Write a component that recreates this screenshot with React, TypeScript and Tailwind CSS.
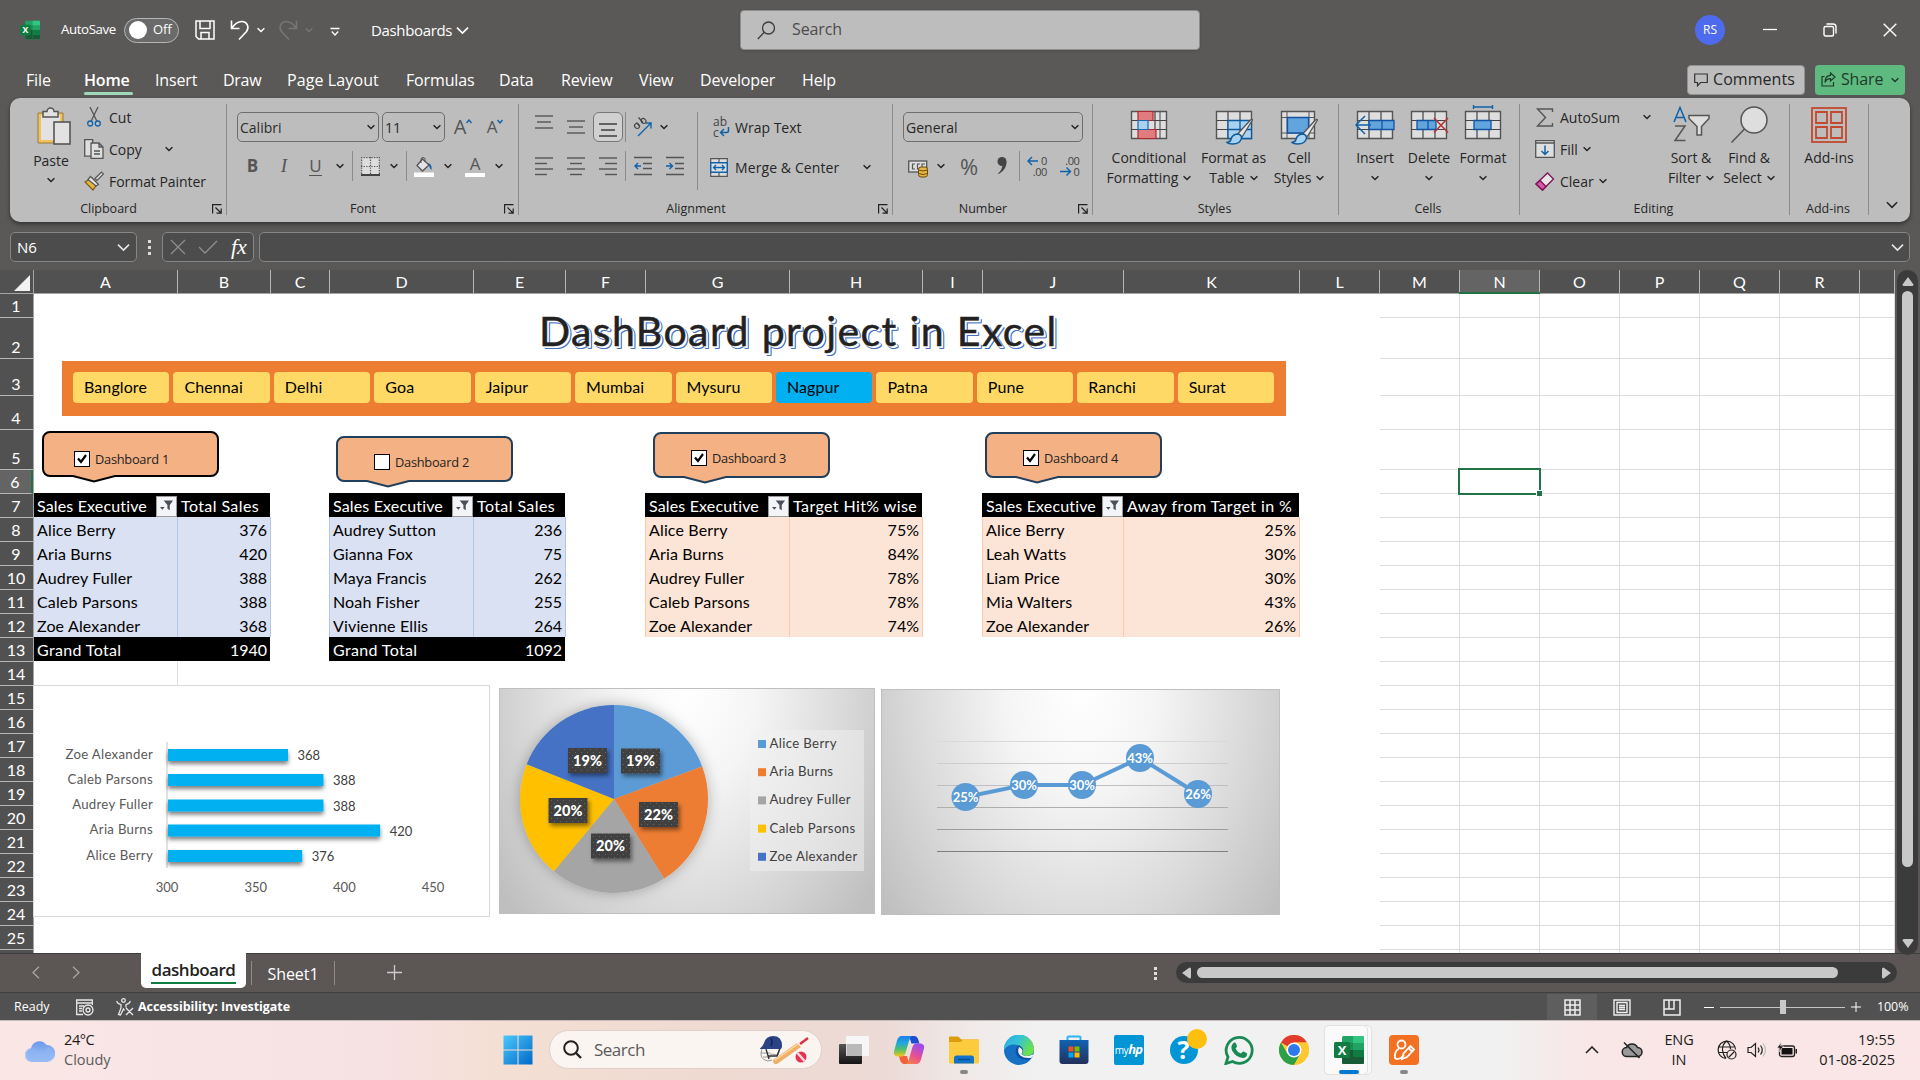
import React from "react";

const UI = "font-['Open_Sans','Noto_Sans',sans-serif]";
const CAL = "font-['Lato','Open_Sans',sans-serif]";

type P = { className?: string; children?: React.ReactNode };

const Chev = ({ className = "text-[#222]", w = 8 }: { className?: string; w?: number }) => (
  <svg width={w} height={w} viewBox="0 0 8 8" className={"shrink-0 " + className} fill="none" stroke="currentColor" strokeWidth={w > 9 ? 1 : 1.4}>
    <path d="M0.6 2.2 4 5.6 7.4 2.2" />
  </svg>
);

const Slot = ({ className = "", children }: P) => (
  <div className={"flex shrink-0 items-center justify-center " + className}>{children}</div>
);

/* ---------- Title bar ---------- */
const ExcelLogo = ({ size }: { size: number }) => (
  <svg width={size} height={size} viewBox="0 0 30 30">
    <rect x="8" y="1" width="22" height="28" rx="1.5" fill="#21a366" />
    <path d="M19 1h9.5A1.5 1.5 0 0 1 30 2.500V8H19z" fill="#33c481" />
    <path d="M8 8h11v7H8z" fill="#107c41" opacity=".55" />
    <path d="M19 15h11v7H19z" fill="#107c41" />
    <path d="M8 15h11v14H9.500A1.500 1.500 0 0 1 8 27.500z" fill="#185c37" />
    <path d="M19 22h11v5.500a1.500 1.500 0 0 1-1.500 1.500H19z" fill="#185c37" />
    <rect x="0" y="7" width="16" height="16" rx="1.5" fill="#107c41" />
    <text x="8" y="19.600" textAnchor="middle" fontSize="13" fontWeight="700" fill="#fff" fontFamily="Open Sans">X</text>
  </svg>
);

const Undo = ({ flip, className }: { flip?: boolean; className: string }) => (
  <svg width="20" height="22" viewBox="0 0 20 22" fill="none" stroke="currentColor" strokeWidth="1.600" className={className + (flip ? " -scale-x-100" : "")}>
    <path d="M1.500 1.500v8h8M2 9C5 4.500 8 2 12.500 2.500c5 .7 7 6 4 10L9 20.500" />
  </svg>
);

const TitleBar = () => (
  <div className="flex h-[60px] shrink-0 items-center pl-5 text-white">
    <ExcelLogo size={20} />
    <span className="ml-[21px] w-[55px] text-[13.300px] tracking-[-0.4px]">AutoSave</span>
    <div className="ml-2 flex h-[25px] w-[55px] items-center rounded-full border border-[#b5b5b5] bg-[#6a6a6a] pl-1">
      <div className="size-[18px] rounded-full bg-white" />
      <span className="ml-[6px] text-[13px]">Off</span>
    </div>
    <svg width="20" height="20" viewBox="0 0 20 20" fill="none" stroke="white" strokeWidth="1.500" className="ml-4">
      <path d="M1 1h18v18H3.500L1 16.500zM5 1v7.500h10V1M6 19v-6.500h8V19" />
    </svg>
    <Undo className="ml-[15px] text-white" />
    <Chev className="ml-[7px] text-white" />
    <Undo flip className="ml-[13px] text-[#777573]" />
    <Chev className="ml-[7px] text-[#777573]" />
    <svg width="10" height="10" viewBox="0 0 10 10" fill="none" stroke="white" strokeWidth="1.300" className="ml-[17px] mt-1">
      <path d="M0.500 1.500h9M1.800 4.500 5 8l3.200-3.500" />
    </svg>
    <span className="ml-[31px] w-[80px] text-[15px] tracking-[-0.35px]">Dashboards</span>
    <Chev w={13} className="ml-[5px] text-white" />
    <div className="ml-[271px] flex h-10 w-[460px] items-center rounded-[4px] border border-[#8d8d8d] bg-[#bdbdbd] pl-4 text-[16px] text-[#4c4c4c] shadow">
      <svg width="19" height="19" viewBox="0 0 19 19" fill="none" stroke="#3b3b3b" strokeWidth="1.300">
        <circle cx="11.500" cy="7" r="6" />
        <path d="M7.300 11.300.8 18" />
      </svg>
      <span className="-mt-[2px] ml-4 tracking-[-0.1px]">Search</span>
    </div>
    <Slot className="ml-[495px] size-[30px] rounded-full bg-[#4f6bed] text-[12px]">RS</Slot>
    <svg width="14" height="14" viewBox="0 0 14 14" stroke="white" strokeWidth="1.300" className="ml-[38px]"><path d="M0 6.500h14" /></svg>
    <svg width="14" height="14" viewBox="0 0 14 14" fill="none" stroke="white" strokeWidth="1.400" className="ml-[46px]">
      <rect x="1" y="3.500" width="9.500" height="9.500" rx="1.500" /><path d="M3.500 1h6.500a3 3 0 0 1 3 3v6.500" />
    </svg>
    <svg width="14" height="14" viewBox="0 0 14 14" stroke="white" strokeWidth="1.400" className="ml-[46px]"><path d="m.7.7 12.600 12.600M13.300.7.700 13.300" /></svg>
  </div>
);

const TabsBar = () => (
  <div className="flex h-[38px] shrink-0 items-center pl-[26px] pt-[1px] text-[16px] tracking-[-0.15px] text-white">
    <span className="w-[58px]">File</span>
    <div className="relative w-[71px]">
      <span className="font-semibold">Home</span>
      <div className="absolute -bottom-[3px] left-0 h-[3px] w-[49px] rounded-full bg-[#9fd8b8]" />
    </div>
    <span className="w-[68px]">Insert</span>
    <span className="w-16 tracking-[-0.3px]">Draw</span>
    <span className="w-[119px] tracking-[0.1px]">Page Layout</span>
    <span className="w-[93px]">Formulas</span>
    <span className="w-[62px]">Data</span>
    <span className="w-[78px]">Review</span>
    <span className="w-[61px]">View</span>
    <span className="w-[102px]">Developer</span>
    <span className="w-[60px]">Help</span>
    <div className="ml-[825px] flex h-[30px] w-[118px] items-center rounded-[4px] border border-[#929292] bg-[#bdbdbd] pl-[6px] tracking-[0.05px] text-[#262626]">
      <svg width="14" height="14" viewBox="0 0 14 14" fill="none" stroke="#333" strokeWidth="1.200"><path d="M.7 1h12.600v8.500H6.500L3.500 12.800V9.500H.7z" /></svg>
      <span className="-mt-px ml-[5px]">Comments</span>
    </div>
    <div className="ml-[10px] flex h-[30px] w-[90px] items-center rounded-[4px] bg-[#5fba80] pl-[6px] text-[#1e3a2a]">
      <svg width="15" height="15" viewBox="0 0 15 15" fill="none" stroke="#1e3a2a" strokeWidth="1.200"><path d="M3.500 4.500H1V14h11.500v-4M9.500 1l4.500 4-4.500 4V6.700C7 6.700 5 7.800 4 10.500 4 6 6 3.500 9.500 3.300z" /></svg>
      <span className="-mt-px ml-[5px]">Share</span>
      <Chev className="ml-[8px] text-[#1e3a2a]" />
    </div>
  </div>
);

/* ---------- Ribbon ---------- */
const Launcher = () => (
  <svg width="10" height="10" viewBox="0 0 10 10" fill="none" stroke="#222" strokeWidth="1.200" className="absolute right-[5px] top-[8px]">
    <path d="M.6 9.500V.6h8.900M3.500 3.500l5.500 5.500M9.200 4.500v4.700H4.500" />
  </svg>
);

const Group = ({ className, label, launcher, children }: P & { label: string; launcher?: boolean }) => (
  <div className={"relative flex shrink-0 flex-col " + className}>
    <div className="h-[98px]">{children}</div>
    <div className={"flex h-[26px] items-center justify-center pt-px text-[12.500px] " + (launcher ? "pr-5" : "pr-[3px] pt-[3px]")}>{label}</div>
    {launcher && <div className="absolute bottom-0 right-0 h-[26px] w-5"><Launcher /></div>}
    <div className="absolute right-0 top-[6px] h-[111px] w-px bg-[#8c8c8c]" />
  </div>
);

const VSep = ({ className }: P) => <div className={"w-px shrink-0 bg-[#8c8c8c] " + className} />;

const Big = ({ className, icon, a, b }: { className: string; icon: React.ReactNode; a: string; b?: string }) => (
  <div className={"flex shrink-0 flex-col items-center whitespace-nowrap pt-1 text-[14px] leading-5 " + className}>
    <Slot className="h-[46px]">{icon}</Slot>
    <span>{a}</span>
    {b !== undefined && (
      <span className="flex h-5 items-center gap-[5px]">{b}<Chev /></span>
    )}
  </div>
);

const Lines = ({ w, y, x = [0, 0, 0, 0], className = "text-[#555]" }: { w: number[]; y: number[]; x?: number[]; className?: string }) => (
  <svg width="18" height="20" viewBox="0 0 18 20" className={className} stroke="currentColor" strokeWidth="1.400">
    {w.map((v, i) => <path key={i} d={`M${x[i]} ${y[i]}h${v}`} />)}
  </svg>
);

const Clipboard = () => (
  <Group className="w-[217px]" label="Clipboard" launcher>
    <div className="flex">
      <div className="flex w-[74px] flex-col items-center pl-2 pt-[9px] text-[14px]">
        <svg width="34" height="39" viewBox="0 0 34 39" className="ml-[5px]">
          <path d="M1 6h25v30H1z" fill="#f0c15c" stroke="#9a7a35" />
          <path d="M4 8h19v25H4z" fill="#e2e2e2" />
          <path d="M6 4.500h4a3.500 3.500 0 0 1 7 0h4V10H6z" fill="#e2e2e2" stroke="#555" strokeWidth="1.500" />
          <rect x="17" y="15" width="16" height="22" fill="#e2e2e2" stroke="#555" strokeWidth="1.600" />
        </svg>
        <span className="mt-[5px] leading-5">Paste</span>
        <Chev className="mt-[5px] text-[#222]" />
      </div>
      <div className="pt-[3px] text-[14px]">
        <div className="flex h-8 items-center">
          <Slot className="w-5">
            <svg width="14" height="20" viewBox="0 0 14 20" fill="none" strokeWidth="1.300">
              <path d="M3 0l6.800 14M11 0 4.200 14" stroke="#555" />
              <circle cx="3.200" cy="16.500" r="2.500" stroke="#0f62a8" /><circle cx="10.800" cy="16.500" r="2.500" stroke="#0f62a8" />
            </svg>
          </Slot>
          <span className="ml-[5px]">Cut</span>
        </div>
        <div className="flex h-8 items-center">
          <Slot className="w-5">
            <svg width="20" height="20" viewBox="0 0 20 20" fill="#dedede" stroke="#555" strokeWidth="1.300">
              <path d="M.7.7h8v16.500h-8z" /><path d="M7 4h8l4 4v11.300H7zM15 4v4h4M10 12h6M10 15h6" />
            </svg>
          </Slot>
          <span className="ml-[5px] w-[54px]">Copy</span>
          <Chev className="ml-[2px] text-[#222]" />
        </div>
        <div className="flex h-8 items-center">
          <Slot className="w-5">
            <svg width="20" height="20" viewBox="0 0 20 20" strokeWidth="1.200">
              <path d="M1 11l7-4 5.500 5.500L9 19z" fill="#e8b640" stroke="#7a5a1a" />
              <path d="M6.500 5.500l8 8-2.500 1.500L4 8.500z" fill="#e8e8e8" stroke="#555" />
              <path d="M11 7.500 17.500 1 19.500 3 13 9.500z" fill="#ddd" stroke="#555" />
            </svg>
          </Slot>
          <span className="ml-[5px] whitespace-nowrap tracking-[-0.05px]">Format Painter</span>
        </div>
      </div>
    </div>
  </Group>
);

const Select = ({ className, children }: P) => (
  <div className={"flex h-[30px] shrink-0 items-center justify-between rounded-[5px] border border-[#6e6e6e] pl-[2px] pr-[3px] text-[14px] " + className}>
    {children}<Chev />
  </div>
);

const FontGroup = () => (
  <Group className="w-[292px]" label="Font" launcher>
    <div className="pl-[10px] pt-[14px] text-[#555]">
      <div className="flex h-[30px] items-center">
        <Select className="w-[142px] text-[#2b2b2b]">Calibri</Select>
        <Select className="ml-[3px] w-[63px] text-[#2b2b2b]">11</Select>
        <Slot className="relative w-8 pl-1"><span className="text-[20px]">A</span><svg width="6" height="5" viewBox="0 0 6 5" className="mb-3" fill="none" stroke="#0f62a8" strokeWidth="1.400"><path d="M.5 4 3 1l2.500 3" /></svg></Slot>
        <Slot className="relative w-8 pl-1"><span className="text-[17px]">A</span><svg width="6" height="5" viewBox="0 0 6 5" className="mb-3" fill="none" stroke="#0f62a8" strokeWidth="1.400"><path d="M.5 1 3 4l2.500-3" /></svg></Slot>
      </div>
      <div className="mt-2 flex h-8 items-center text-[17px]">
        <Slot className="w-[31px] font-bold">B</Slot>
        <Slot className="w-8 font-['Liberation_Serif',serif] text-[19px] italic">I</Slot>
        <Slot className="w-[31px]"><span className="border-b-[1.500px] border-[#555] leading-[18px]">U</span></Slot>
        <Slot className="w-[17px]"><Chev /></Slot>
        <VSep className="ml-1 h-[30px]" />
        <Slot className="ml-[7px] w-5">
          <svg width="19" height="19" viewBox="0 0 19 19" fill="none">
            <rect x=".5" y=".5" width="18" height="18" fill="#dedede" />
            <path d="M.7 0v18M9.500 0v18M18.300 0v18M0 .7h19M0 9.500h19" stroke="#555" strokeWidth="1.200" strokeDasharray="1.300 1.300" />
            <path d="M0 18h19" stroke="#333" strokeWidth="1.800" />
          </svg>
        </Slot>
        <Slot className="ml-[5px] w-[17px]"><Chev /></Slot>
        <VSep className="ml-1 h-[30px]" />
        <Slot className="ml-[7px] w-5">
          <svg width="20" height="20" viewBox="0 0 20 20" className="mt-[2px]">
            <path d="M8.500 2 15 8l-6.500 6L3 8.500z" fill="#e4e4e4" stroke="#555" strokeWidth="1.300" />
            <path d="M7 6V2.500a2 2 0 0 1 4 0V5" fill="none" stroke="#555" />
            <path d="M14 6c3 1 4 3 3.500 7-1.500-1-2-3-2.500-5z" fill="#0f62a8" />
            <path d="M0 15.500h20V20H0z" fill="#fff" />
          </svg>
        </Slot>
        <Slot className="ml-[5px] w-[17px]"><Chev /></Slot>
        <Slot className="ml-[9px] w-5 flex-col">
          <span className="text-[17px] leading-[18px]">A</span><span className="h-[4px] w-5 bg-white" />
        </Slot>
        <Slot className="ml-[5px] w-[17px]"><Chev /></Slot>
      </div>
    </div>
  </Group>
);

const Indent = ({ dir }: { dir: "l" | "r" }) => (
  <svg width="18" height="20" viewBox="0 0 18 20" fill="none" strokeWidth="1.400">
    <path d="M0 1.500h18M9 7.500h9M9 12.500h9M0 18.500h18" stroke="#555" />
    <path d={dir === "l" ? "M7 10H1M4 7l-3 3 3 3" : "M0 10h6M3.500 7l3 3-3 3"} stroke="#0f62a8" />
  </svg>
);

const Alignment = () => (
  <Group className="w-[374px]" label="Alignment" launcher>
    <div className="flex pt-[14px] text-[14px]">
      <div>
        <div className="flex h-[30px] items-center pl-[9px]">
          <Slot className="w-8 pb-2"><Lines w={[18, 14, 18]} x={[0, 2, 0]} y={[3, 9, 15]} /></Slot>
          <Slot className="w-8"><Lines w={[18, 14, 18]} x={[0, 2, 0]} y={[4, 10, 16]} /></Slot>
          <Slot className="h-[30px] w-8"><Slot className="h-[30px] w-[30px] rounded-[6px] border border-[#777] bg-[#d0d0d0] pt-2"><Lines w={[18, 14, 18]} x={[0, 2, 0]} y={[3, 9, 15]} className="text-[#333]" /></Slot></Slot>
          <VSep className="ml-px h-[30px]" />
          <Slot className="ml-[7px] w-5">
            <svg width="20" height="20" viewBox="0 0 20 20" fill="none">
              <g stroke="#444" strokeWidth="1.200">
                <ellipse cx="4" cy="9" rx="2.200" ry="2.600" transform="rotate(-45 4 9)" /><path d="M3.500 5.500 7 9.500" />
                <ellipse cx="10.500" cy="4" rx="2.200" ry="2.600" transform="rotate(-45 10.500 4)" /><path d="M5.500.500 10 5.500" />
              </g>
              <path d="M5 19 18 6M12.500 6H18v5.500" stroke="#0f62a8" strokeWidth="1.400" />
            </svg>
          </Slot>
          <Slot className="ml-[2px] w-[18px]"><Chev /></Slot>
        </div>
        <div className="mt-2 flex h-8 items-center pl-[9px]">
          <Slot className="w-8"><Lines w={[18, 12, 18, 12]} y={[2, 7.500, 13, 18.500]} /></Slot>
          <Slot className="w-8"><Lines w={[18, 12, 18, 12]} x={[0, 3, 0, 3]} y={[2, 7.500, 13, 18.500]} /></Slot>
          <Slot className="w-8"><Lines w={[18, 12, 18, 12]} x={[0, 6, 0, 6]} y={[2, 7.500, 13, 18.500]} /></Slot>
          <VSep className="ml-px h-[30px]" />
          <Slot className="ml-[1px] w-8"><Indent dir="l" /></Slot>
          <Slot className="w-8"><Indent dir="r" /></Slot>
        </div>
      </div>
      <VSep className="ml-[6px] h-[78px]" />
      <div className="pl-[12px]">
        <div className="flex h-[30px] items-center">
          <div className="relative h-5 w-[18px] pl-[3px] text-[12px] leading-[9px] text-[#444]">
            <div>ab</div><div className="pt-[2px]">c</div>
            <svg width="18" height="20" viewBox="0 0 18 20" fill="none" className="absolute inset-0 left-[2px]">
              <path d="M16.500 10v3.500q0 2-2 2H8.500M12 12l-3.500 3.500L12 19" stroke="#0f62a8" strokeWidth="1.500" />
            </svg>
          </div>
          <span className="ml-[7px]">Wrap Text</span>
        </div>
        <div className="mt-[9px] flex h-8 items-center">
          <svg width="18" height="19" viewBox="0 0 18 19" fill="#dedede">
            <path d="M.7.7h16.600v17.600H.700zM9 .7v17.600" stroke="#555" strokeWidth="1.200" />
            <path d="M.7 4.700h16.600v9.600H.700z" stroke="#0f62a8" strokeWidth="1.500" />
            <path d="M3.500 9.500h11M6 7 3.500 9.500 6 12M12 7l2.500 2.500L12 12" stroke="#0f62a8" fill="none" strokeWidth="1.300" />
          </svg>
          <span className="ml-[7px] w-[128px] whitespace-nowrap tracking-[0.1px]">Merge &amp; Center</span>
          <Chev />
        </div>
      </div>
    </div>
  </Group>
);

const DecIcon = ({ inc }: { inc?: boolean }) => (
  <div className="relative flex h-[22px] w-5 flex-col items-end text-[11px] leading-[11px] tracking-[-0.4px] text-[#444]">
    <span>{inc ? "0" : ".00"}</span>
    <span>{inc ? ".00" : "0"}</span>
    <svg width="20" height="22" viewBox="0 0 20 22" fill="none" className="absolute inset-0">
      <path d={inc ? "M11 6H1M5 2 1 6l4 4" : "M0 16.500h10M6.500 12.500l4 4-4 4"} stroke="#0f62a8" strokeWidth="1.400" />
    </svg>
  </div>
);

const NumberGroup = () => (
  <Group className="w-[200px]" label="Number" launcher>
    <div className="pl-[10px] pt-[14px]">
      <Select className="w-[180px]">General</Select>
      <div className="mt-2 flex h-8 items-center">
        <Slot className="ml-[5px] w-5">
          <svg width="20" height="20" viewBox="0 0 20 20" className="mt-[3px]">
            <rect x=".7" y="3" width="18" height="11" fill="#dedede" stroke="#555" strokeWidth="1.300" />
            <path d="M7 6H4.500v5H7M12 6H9.500v5H12M14 11V6h3" fill="none" stroke="#555" strokeWidth="1.200" />
            <rect x="10.500" y="9" width="9" height="10" rx="2.500" fill="#e8b640" stroke="#6a4b10" /><path d="M10.500 12q4.500 2 9 0M10.500 15.500q4.500 2 9 0" fill="none" stroke="#6a4b10" />
          </svg>
        </Slot>
        <Slot className="ml-[4px] w-[18px]"><Chev /></Slot>
        <Slot className="ml-[2px] w-[34px] text-[22px] text-[#555]">%</Slot>
        <Slot className="w-8">
          <svg width="10" height="18" viewBox="0 0 10 18"><circle cx="5" cy="4.500" r="4.500" fill="#444" /><path d="M9.500 4.500c0 6-3 10-8 12.500l-.5-.8C4 14 5.500 11 5.500 7z" fill="#444" /></svg>
        </Slot>
        <VSep className="ml-px h-[30px]" />
        <Slot className="ml-[1px] w-[32px]"><DecIcon inc /></Slot>
        <Slot className="w-[33px]"><DecIcon /></Slot>
      </div>
    </div>
  </Group>
);

const GridBase = ({ children, w = 40 }: { children?: React.ReactNode; w?: number }) => (
  <svg width={w} height="42" viewBox={`0 0 ${w} 42`} fill="none">
    <path d="M2.500 7.500h35v27h-35z" fill="#dedede" stroke="#555" strokeWidth="1.400" />
    <path d="M14 7.500v27M26 7.500v27M2.500 16.500h35M2.500 25.500h35" stroke="#444" strokeWidth="1.200" />
    {children}
  </svg>
);

const Brush = () => (
  <g>
    <path d="M38.500 16 28 33l-4-3.500L36 16.500q2-2 2.500-.5z" fill="#e6e6e6" stroke="#555" strokeWidth="1.300" />
    <path d="M23.500 30q4 .5 4 4-1 6-9 6-4 0-5.500-1.500 3.500-.5 4-3 1-5 6.500-5.500z" fill="#a9d2f0" stroke="#0f5a9c" strokeWidth="1.400" />
  </g>
);

const Styles = () => (
  <Group className="w-[246px]" label="Styles">
    <div className="flex pl-[8px]">
      <Big className="w-24" a="Conditional" b="Formatting" icon={
        <GridBase><path d="M9 7.500h15v9H9zM9 25.500h18v9H9z" fill="#e07b7e" stroke="#b0272d" strokeWidth="1.200" /><path d="M9 16.500h10v9H9z" fill="#a9d2f0" stroke="#1a6ab5" strokeWidth="1.200" /><path d="M31 7.500v27" stroke="#444" /></GridBase>} />
      <Big className="w-[73px]" a="Format as" b="Table" icon={
        <GridBase><path d="M14 16.500h23.500v18H14zM26 16.500v18M14 25.500h23.500" fill="#a9d2f0" stroke="#0f5a9c" strokeWidth="1.300" /><Brush /></GridBase>} />
      <Big className="w-[58px]" a="Cell" b="Styles" icon={
        <svg width="40" height="42" viewBox="0 0 40 42" fill="none">
          <path d="M2.500 7.500h33v27h-33z" fill="#dedede" stroke="#555" strokeWidth="1.400" /><path d="M8 7.500v27M30 7.500v27M2.500 13.500h33M2.500 29h33" stroke="#555" />
          <path d="M8.500 13.500h21V29h-21z" fill="#62a5dc" stroke="#1253a4" strokeWidth="1.300" /><Brush />
        </svg>} />
    </div>
  </Group>
);

const Cells = () => (
  <Group className="w-[181px]" label="Cells">
    <div className="flex pl-[9px]">
      <Big className="w-[54px]" a="Insert" b="" icon={
        <GridBase><path d="M14 16.500h25v9H14zM27 16.500v9" fill="#62a5dc" stroke="#1253a4" strokeWidth="1.300" /><path d="M16 21H1.500M10 12l-9 9 9 9" stroke="#0f62a8" strokeWidth="1.500" /></GridBase>} />
      <Big className="w-[54px]" a="Delete" b="" icon={
        <GridBase><path d="M8 16.500h19v9H8zM19 16.500v9" fill="#62a5dc" stroke="#1253a4" strokeWidth="1.300" /><path d="M25 14l14 14.500M39 14 25 28.500" stroke="#b8352f" strokeWidth="1.600" /></GridBase>} />
      <Big className="w-[54px]" a="Format" b="" icon={
        <GridBase><path d="M11 16.500h17v9H11z" fill="#62a5dc" stroke="#1253a4" strokeWidth="1.300" /><path d="M10.500 3h19M10.500 1v4M29.500 1v4" stroke="#0f62a8" strokeWidth="1.400" /></GridBase>} />
    </div>
  </Group>
);

const Editing = () => (
  <Group className="w-[270px]" label="Editing">
    <div className="flex pl-[15px]">
      <div className="w-[126px] pt-[3px] text-[14px]">
        <div className="flex h-8 items-center">
          <svg width="20" height="19" viewBox="0 0 20 19" fill="none" stroke="#555" strokeWidth="1.400"><path d="M17.500 4V1h-15l8 8.500-8 8.500h15v-3" /></svg>
          <span className="ml-[5px] w-[83px]">AutoSum</span><Chev />
        </div>
        <div className="flex h-8 items-center">
          <svg width="20" height="18" viewBox="0 0 20 18" fill="none"><path d="M.7.7h18.600v16.600H.700z" fill="#dedede" stroke="#555" strokeWidth="1.300" /><path d="M.7 3h18.600" stroke="#555" strokeWidth="1.500" /><path d="M10 5.500v9M6.500 11l3.500 3.500 3.500-3.500" stroke="#0f62a8" strokeWidth="1.500" /></svg>
          <span className="ml-[5px] mr-[5px]">Fill</span><Chev />
        </div>
        <div className="flex h-8 items-center">
          <svg width="20" height="19" viewBox="0 0 20 19"><path d="M12.500 1 18.500 7 7.500 18 1 12z" fill="#e6e6e6" stroke="#7c1054" strokeWidth="1.300" /><path d="M5 8.500 11 14.500 7.500 18 1 12z" fill="#d65aa6" stroke="#7c1054" strokeWidth="1.300" /></svg>
          <span className="ml-[5px] mr-[5px]">Clear</span><Chev />
        </div>
      </div>
      <Big className="w-[60px]" a="Sort &" b="Filter" icon={
        <svg width="38" height="38" viewBox="0 0 38 38" fill="none">
          <path d="M2 16 8 1.500 14 16M4 11.500h8" stroke="#0f62a8" strokeWidth="1.500" /><path d="M3 20h10L3 34.500h10.500" stroke="#555" strokeWidth="1.500" />
          <path d="M17 9.500h20v3l-7.500 8V29h-4.500v-8.500L17 12.500z" fill="#dedede" stroke="#555" strokeWidth="1.500" />
        </svg>} />
      <Big className="w-[56px]" a="Find &" b="Select" icon={
        <svg width="38" height="38" viewBox="0 0 38 38"><circle cx="24" cy="14" r="13" fill="#dedede" stroke="#555" strokeWidth="1.500" /><path d="M14.500 23 1.500 36.500" stroke="#555" strokeWidth="1.600" /></svg>} />
    </div>
  </Group>
);

const Ribbon = () => (
  <div className="mx-[10px] flex h-[124px] shrink-0 rounded-[10px] bg-[#bdbdbd] text-[#262626] shadow-[0_2px_4px_rgba(0,0,0,0.45)]">
    <Clipboard />
    <FontGroup />
    <Alignment />
    <NumberGroup />
    <Styles />
    <Cells />
    <Editing />
    <Group className="w-[79px]" label="Add-ins">
      <Big className="w-[78px]" a="Add-ins" icon={
        <svg width="36" height="36" viewBox="0 0 36 36" fill="none" stroke="#c0492f">
          <rect x="1" y="1" width="34" height="34" strokeWidth="1.800" /><path d="M5 5h11v11H5zM20 5h11v11H20zM5 20h11v11H5zM20 20h11v11H20z" strokeWidth="1.800" />
        </svg>} />
    </Group>
    <div className="flex flex-1 items-end justify-center pb-[11px] pl-[5px]"><Chev w={12} /></div>
  </div>
);

const FormulaBar = () => (
  <div className="mt-[10px] flex h-[38px] shrink-0 px-[10px] text-[14px] text-white">
    <div className="flex h-[30px] w-[127px] items-center justify-between rounded-[5px] border border-[#868686] bg-[#4c4c4c] pl-[6px] pr-[6px] text-[15px]">N6<Chev w={13} className="text-[#e5e5e5]" /></div>
    <Slot className="h-[30px] w-[25px]">
      <div className="flex flex-col gap-[3px]"><i className="size-[3px] bg-[#ddd]" /><i className="size-[3px] bg-[#ddd]" /><i className="size-[3px] bg-[#ddd]" /></div>
    </Slot>
    <div className="flex h-[30px] w-[92px] items-center rounded-[5px] border border-[#868686] bg-[#4c4c4c] pl-[7px]">
      <svg width="16" height="16" viewBox="0 0 16 16" stroke="#8f8f8f" strokeWidth="1.300"><path d="m1 1 14 14M15 1 1 15" /></svg>
      <svg width="20" height="14" viewBox="0 0 20 14" fill="none" stroke="#8f8f8f" strokeWidth="1.300" className="ml-3"><path d="m1 7 6 6L19 1" /></svg>
      <span className="ml-[13px] font-['Liberation_Serif',serif] text-[22px] italic leading-none">fx</span>
    </div>
    <div className="ml-[5px] flex h-[30px] flex-1 items-center justify-end rounded-[5px] border border-[#868686] bg-[#4c4c4c] pr-[5px]"><Chev w={13} className="text-[#e5e5e5]" /></div>
  </div>
);

/* ---------- Worksheet ---------- */
const COLS: [string, string][] = [
  ["A", "w-[144px]"], ["B", "w-[93px]"], ["C", "w-[59px]"], ["D", "w-[144px]"], ["E", "w-[92px]"], ["F", "w-[80px]"],
  ["G", "w-[144px]"], ["H", "w-[133px]"], ["I", "w-[60px]"], ["J", "w-[141px]"], ["K", "w-[176px]"], ["L", "w-[80px]"],
  ["M", "w-[80px]"], ["N", "w-[80px]"], ["O", "w-[80px]"], ["P", "w-[80px]"], ["Q", "w-[80px]"], ["R", "w-[80px]"], ["", "w-[35px]"],
];

const ROW_H = ["h-[24px]", "h-[41px]", "h-[37px]", "h-[34px]", "h-[40px]", ...Array(20).fill("h-[24px]")];

const FilterBtn = () => (
  <div className="flex h-[21px] w-[21px] shrink-0 items-center justify-center border border-[#9b9b9b] bg-[#f2f4f8]">
    <svg width="13" height="12" viewBox="0 0 14 12" fill="#4a4f58"><path d="M4 0h10L10.500 5v5.500L8 9V5zM0 7h5L2.500 10z" /></svg>
  </div>
);

type TableProps = { className: string; cols: string; h2: string; rows: [string, string][]; total?: string; tone: "blue" | "peach"; leftEdge?: boolean };
const SheetTable = ({ className, cols, h2, rows, total, tone, leftEdge }: TableProps) => {
  const body = tone === "blue" ? "bg-[#d9e1f2] border-[#b4c6e7]" : "bg-[#fce4d6] border-[#f8cbad]";
  const pad = leftEdge ? "pl-[4px] " : "pl-[3px] ";
  return (
    <div className={"-mt-px self-start text-[16px] leading-[26px] tracking-[0.15px] text-black " + (leftEdge ? "-ml-px " : "") + className}>
      <div className={"mr-px grid h-6 bg-black text-white " + cols}>
        <div className={"flex items-center justify-between pr-[1px] " + pad}><span className="whitespace-nowrap">Sales Executive</span><FilterBtn /></div>
        <div className="whitespace-nowrap pl-[3px] tracking-[0.4px]">{h2}</div>
      </div>
      {rows.map(([a, b]) => (
        <div key={a} className={"grid h-6 " + cols}>
          <div className={"h-6 border-r pl-[3px] " + (leftEdge ? "border-l " : "") + body}>{a}</div>
          <div className={"h-6 border-r pr-[3px] text-right tracking-normal " + body}>{b}</div>
        </div>
      ))}
      {total && (
        <div className={"mr-px grid h-6 bg-black text-white " + cols}>
          <div className={pad + "tracking-[0.35px]"}>Grand Total</div>
          <div className="pr-[3px] text-right tracking-normal">{total}</div>
        </div>
      )}
    </div>
  );
};

const Slicer = () => (
  <div className="absolute left-[28px] top-[67px] flex h-[55px] w-[1224px] gap-1 bg-[#ed7d31] pb-[13px] pl-[11px] pr-[12px] pt-[11px] text-[16px] tracking-[0.1px] text-black">
    {["Banglore", "Chennai", "Delhi", "Goa", "Jaipur", "Mumbai", "Mysuru", "Nagpur", "Patna", "Pune", "Ranchi", "Surat"].map((c) => (
      <div key={c} className={"flex flex-1 items-center rounded-[4px] pb-px pl-[11px] " + (c === "Nagpur" ? "bg-[#00b0f0]" : "bg-[#ffd966]")}>{c}</div>
    ))}
  </div>
);

const Callout = ({ className, n, checked = true, dark, pad }: { className: string; n: number; checked?: boolean; dark?: boolean; pad: string }) => (
  <div className={"absolute h-[54px] w-[177px] " + className}>
    <svg width="177" height="54" viewBox="0 0 177 54" className="absolute inset-0">
      <path d="M8 1h161a7 7 0 0 1 7 7v30a7 7 0 0 1-7 7H73L52 50.500 31 45H8a7 7 0 0 1-7-7V8a7 7 0 0 1 7-7z" fill="#f4b183" stroke={dark ? "#000" : "#203f5c"} strokeWidth="2" />
    </svg>
    <div className={"relative flex items-center font-['Open_Sans',sans-serif] text-[12.800px] leading-4 tracking-[-0.25px] text-[#222] " + pad}>
      <Slot className="size-4 border border-black bg-white">
        {checked && <svg width="10" height="10" viewBox="0 0 10 10"><path d="M1 4.500 4 8 9 1" fill="none" stroke="#000" strokeWidth="2.200" /></svg>}
      </Slot>
      <span className="ml-[5px]">Dashboard {n}</span>
    </div>
  </div>
);

const BARS: [string, number, number][] = [["Zoe Alexander", 368, 70.500], ["Caleb Parsons", 388, 95.500], ["Audrey Fuller", 388, 121], ["Aria Burns", 420, 146], ["Alice Berry", 376, 171.500]];
const BarChart = () => (
  <svg width="457" height="232" viewBox="0 0 457 232" className="absolute left-[-1px] top-[391px]" fontFamily="Lato" fontSize="13" fill="#595959">
    <defs><filter id="bs" x="-10%" y="-50%" width="120%" height="250%"><feDropShadow dx="0" dy="3" stdDeviation="2" floodColor="#000" floodOpacity=".5" /></filter></defs>
    <rect x=".5" y=".5" width="456" height="231" fill="#fff" stroke="#d9d9d9" />
    <path d="M134 57v126" stroke="#d9d9d9" strokeWidth="1.500" />
    {BARS.map(([n, v, y]) => (
      <g key={n}>
        <rect x="135" y={y - 6.500} width={(v - 300) * 1.772 - 0.500} height="12" fill="#00b0f0" filter="url(#bs)" />
        <text x="120" y={y + 3} textAnchor="end" fontSize="13.200" letterSpacing=".3">{n}</text>
        <text x={135 + (v - 300) * 1.772 + 9} y={y + 4.500} fill="#404040">{v}</text>
      </g>
    ))}
    {[300, 350, 400, 450].map((v, i) => <text key={v} x={134 + i * 88.700} y="207" textAnchor="middle">{v}</text>)}
  </svg>
);

const PIE: [string, number, string, number, number][] = [
  ["Alice Berry", 376, "#5b9bd5", 141.500, 73], ["Aria Burns", 420, "#ed7d31", 159.500, 126.500], ["Audrey Fuller", 388, "#a5a5a5", 111.500, 158],
  ["Caleb Parsons", 388, "#ffc000", 69, 122.500], ["Zoe Alexander", 368, "#4472c4", 88.500, 72.500],
];

const PlotGradient = ({ id, cx, r }: { id: string; cx: number; r: number }) => (
  <radialGradient id={id} gradientUnits="userSpaceOnUse" cx={cx} cy="0" r={r} gradientTransform="scale(1 1.4)">
    <stop offset="0" stopColor="#fff" /><stop offset=".3" stopColor="#f5f5f5" /><stop offset=".68" stopColor="#d9d9d9" /><stop offset="1" stopColor="#bfbfbf" />
  </radialGradient>
);

const PieChart = () => {
  const cx = 115, cy = 111, r = 94;
  let acc = 0;
  const pt = (t: number) => `${cx + r * Math.sin(t * 2 * Math.PI)} ${cy - r * Math.cos(t * 2 * Math.PI)}`;
  const slices = PIE.map(([n, v, c]) => {
    const s = acc / 1940;
    acc += v;
    return <path key={n} d={`M${cx} ${cy}L${pt(s)}A${r} ${r} 0 0 1 ${pt(acc / 1940)}z`} fill={c} />;
  });
  return (
    <svg width="376" height="226" viewBox="0 0 376 226" className="absolute left-[465px] top-[394px]" fontFamily="Lato">
      <defs>
        <PlotGradient id="pg" cx={188} r={235} />
        <filter id="ps" x="-20%" y="-20%" width="140%" height="140%"><feDropShadow dx="0" dy="0" stdDeviation="7" floodColor="#000" floodOpacity=".28" /></filter>
        <filter id="ls" x="-30%" y="-30%" width="170%" height="180%"><feDropShadow dx="2" dy="3" stdDeviation="2" floodColor="#000" floodOpacity=".45" /></filter>
        <pattern id="dots" width="6" height="6" patternUnits="userSpaceOnUse"><rect width="6" height="6" fill="#404040" /><rect x="1" y="1" width="1" height="1" fill="#666" /><rect x="4" y="4" width="1" height="1" fill="#666" /></pattern>
      </defs>
      <rect x=".5" y=".5" width="375" height="225" fill="url(#pg)" stroke="#bfbfbf" />
      <g filter="url(#ps)">{slices}</g>
      {PIE.map(([n, v, , x, y]) => (
        <g key={n}>
          <rect x={x - 19.500} y={y - 12.500} width="39" height="25" fill="url(#dots)" filter="url(#ls)" />
          <text x={x} y={y + 5} textAnchor="middle" fontSize="14.500" fontWeight="900" fill="#fff">{Math.round(v / 19.400)}%</text>
        </g>
      ))}
      <rect x="251" y="42" width="114" height="141" fill="#f2f2f2" opacity=".5" />
      {PIE.map(([n, , c], i) => (
        <g key={n}>
          <rect x="259" y={52 + i * 28.200} width="8" height="8" fill={c} />
          <text x="270.500" y={60 + i * 28.200} fontSize="13.200" letterSpacing=".35" fill="#404040">{n}</text>
        </g>
      ))}
    </svg>
  );
};

const PTS: [number, number, number][] = [[84.500, 108, 25], [143, 96, 30], [201, 96, 30], [259, 69, 43], [317, 105, 26]];
const LineChart = () => (
  <svg width="399" height="226" viewBox="0 0 399 226" className="absolute left-[847px] top-[395px]" fontFamily="Lato">
    <defs><PlotGradient id="lg" cx={200} r={250} /></defs>
    <rect x=".5" y=".5" width="398" height="225" fill="url(#lg)" stroke="#bfbfbf" />
    {["#d9d9d9", "#cdcdcd", "#bfbfbf", "#aeaeae", "#9c9c9c", "#7f7f7f"].map((c, i) => <path key={c} d={`M56 ${52.500 + i * 22}h291`} stroke={c} />)}
    <polyline points={PTS.map(([x, y]) => `${x},${y}`).join(" ")} fill="none" stroke="#5b9bd5" strokeWidth="4" />
    {PTS.map(([x, y, v], i) => (
      <g key={i}><circle cx={x} cy={y} r="14" fill="#5b9bd5" /><text x={x} y={y + 5} textAnchor="middle" fontSize="13" fontWeight="700" fill="#fff">{v}%</text></g>
    ))}
  </svg>
);

const Worksheet = () => (
  <div className="flex h-[683px] shrink-0">
    <div className="w-[1895px]">
      <div className="flex h-[24px] border-b border-[#a5a5a5] bg-[#515151] text-[16px] text-white">
        <div className="flex w-[34px] shrink-0 items-end justify-end border-r border-[#a5a5a5] pb-[2px] pr-[3px]">
          <svg width="16" height="16" viewBox="0 0 16 16"><path d="M16 0v16H0z" fill="#f2f2f2" /></svg>
        </div>
        {COLS.map(([c, w], i) => (
          <div key={i} className={"flex shrink-0 items-center justify-center border-r border-[#b5b5b5] pt-px " + w + (c === "N" ? " relative bg-[#646464]" : "")}>
            {c}
            {c === "N" && <div className="absolute -bottom-px -left-px h-[2px] w-[81px] bg-[#217346]" />}
          </div>
        ))}
      </div>
      <div className="flex h-[659px] overflow-hidden bg-white">
        <div className="w-[34px] shrink-0 border-r border-[#a5a5a5] bg-[#515151] text-[16px] text-white">
          {ROW_H.map((h, i) => (
            <div key={i} className={"flex items-end justify-center border-b border-[#b5b5b5] pr-px leading-[22px] " + h + (i === 5 ? " border-r-2 border-r-[#217346] bg-[#646464]" : "")}>{i + 1}</div>
          ))}
        </div>
        <div className="relative flex w-[1861px]">
          <div className="grid w-[1346px] shrink-0 grid-cols-[144px_93px_59px_144px_92px_80px_144px_133px_60px_141px_176px_80px] grid-rows-[200px_168px_24px_1fr]">
            <SheetTable className="col-start-1 col-end-3 row-start-2" cols="grid-cols-[144px_1fr]" h2="Total Sales" tone="blue" total="1940"
              rows={[["Alice Berry", "376"], ["Aria Burns", "420"], ["Audrey Fuller", "388"], ["Caleb Parsons", "388"], ["Zoe Alexander", "368"]]} />
            <SheetTable leftEdge className="col-start-4 col-end-6 row-start-2" cols="grid-cols-[145px_1fr]" h2="Total Sales" tone="blue" total="1092"
              rows={[["Audrey Sutton", "236"], ["Gianna Fox", "75"], ["Maya Francis", "262"], ["Noah Fisher", "255"], ["Vivienne Ellis", "264"]]} />
            <SheetTable leftEdge className="col-start-7 col-end-9 row-start-2" cols="grid-cols-[145px_1fr]" h2="Target Hit% wise" tone="peach"
              rows={[["Alice Berry", "75%"], ["Aria Burns", "84%"], ["Audrey Fuller", "78%"], ["Caleb Parsons", "78%"], ["Zoe Alexander", "74%"]]} />
            <SheetTable leftEdge className="col-start-10 col-end-12 row-start-2" cols="grid-cols-[142px_1fr]" h2="Away from Target in %" tone="peach"
              rows={[["Alice Berry", "25%"], ["Leah Watts", "30%"], ["Liam Price", "30%"], ["Mia Walters", "43%"], ["Zoe Alexander", "26%"]]} />
            <div className="col-start-1 row-start-3 border-r border-[#dedede]" />
          </div>
          <div className="flex">
            {COLS.slice(12).map(([, w], i) => (
              <div key={i} className={"shrink-0 border-r border-[#dedede] " + w}>
                {ROW_H.map((h, j) => <div key={j} className={"border-b border-[#dedede] " + h} />)}
              </div>
            ))}
          </div>
          <h1 className={"absolute left-[505px] top-[11px] whitespace-nowrap text-[41px] leading-[52px] tracking-[1.4px] text-[#222] [text-shadow:1px_1px_0_#fff,2px_2px_0_#fff,3px_3px_0_#4472c4,2px_3px_0_#4472c4,3px_2px_0_#4472c4] [-webkit-text-stroke:0.5px_#222] " + CAL}>DashBoard project in Excel</h1>
          <Slicer />
          <Callout className="left-[8px] top-[137px]" n={1} dark pad="pl-[32px] pt-5" />
          <Callout className="left-[302px] top-[142px]" n={2} checked={false} pad="pl-[38px] pt-[18px]" />
          <Callout className="left-[619px] top-[138px]" n={3} pad="pl-[38px] pt-[18px]" />
          <Callout className="left-[951px] top-[138px]" n={4} pad="pl-[38px] pt-[18px]" />
          <BarChart />
          <PieChart />
          <LineChart />
          <div className="absolute left-[1424px] top-[174px] h-[27px] w-[83px] border-2 border-[#217346]">
            <div className="absolute -bottom-[3px] -right-[3px] size-[6px] border-l border-t border-white bg-[#217346] bg-clip-padding" />
          </div>
        </div>
      </div>
    </div>
    <div className="ml-[2px] flex h-[685px] w-[21px] flex-col items-center rounded-full bg-[#3b3b3b] py-[7px]">
      <svg width="12" height="9" viewBox="0 0 12 9" fill="#c8c8c8"><path d="M6 0l5.500 7.500q0 1.500-1.500 1.500H2Q.5 9 .5 7.500z" /></svg>
      <div className="mt-[5px] h-[576px] w-[11px] rounded-full bg-[#c8c8c8]" />
      <div className="flex-1" />
      <svg width="12" height="9" viewBox="0 0 12 9" fill="#c8c8c8"><path d="M6 9l5.500-7.500Q11.500 0 10 0H2Q.5 0 .5 1.500z" /></svg>
    </div>
  </div>
);

const SheetTabs = () => (
  <div className="flex h-[40px] shrink-0 border-y border-[#3f3d3d] text-[16px] text-white">
    <Slot className="ml-[30px] h-[37px] w-3 text-[#aaa]"><svg width="8" height="13" viewBox="0 0 8 13" fill="none" stroke="currentColor" strokeWidth="1.200"><path d="M7 .7 1 6.500l6 5.800" /></svg></Slot>
    <Slot className="ml-[28px] h-[37px] w-3 text-[#aaa]"><svg width="8" height="13" viewBox="0 0 8 13" fill="none" stroke="currentColor" strokeWidth="1.200"><path d="m1 .7 6 5.800-6 5.800" /></svg></Slot>
    <div className="-mt-px ml-[59px] flex h-[35px] w-[105px] flex-col items-center rounded-b-[5px] bg-white pt-[4px] text-[#222]">
      <span className="text-[17px] font-semibold leading-[25px] tracking-[-0.5px]">dashboard</span>
      <div className="h-[2px] w-[85px] bg-[#107c41]" />
    </div>
    <VSep className="ml-[5px] mt-[7px] h-6" />
    <Slot className="h-[39px] w-[82px] tracking-[-0.05px]">Sheet1</Slot>
    <VSep className="mt-[7px] h-6" />
    <Slot className="ml-[51px] h-[37px] w-4"><svg width="15" height="15" viewBox="0 0 15 15" stroke="#ccc" strokeWidth="1.300"><path d="M7.500 0v15M0 7.500h15" /></svg></Slot>
    <div className="ml-[752px] flex flex-col gap-[2px] pt-[13px]"><i className="size-[3px] bg-[#ddd]" /><i className="size-[3px] bg-[#ddd]" /><i className="size-[3px] bg-[#ddd]" /></div>
    <div className="ml-[19px] mt-2 flex h-[21px] w-[721px] items-center justify-between rounded-full bg-[#3b3b3b] px-[6px]">
      <svg width="9" height="12" viewBox="0 0 9 12" fill="#c8c8c8"><path d="M0 6 7.500.5Q9 .5 9 2v8q0 1.500-1.500 1.500z" /></svg>
      <div className="ml-[6px] h-[11px] w-[641px] rounded-full bg-[#c8c8c8]" />
      <svg width="9" height="12" viewBox="0 0 9 12" fill="#c8c8c8" className="ml-auto"><path d="M9 6 1.500.5Q0 .5 0 2v8q0 1.500 1.500 1.500z" /></svg>
    </div>
  </div>
);

const StatusBar = () => (
  <div className="flex h-[27px] shrink-0 items-center bg-[#515151] pt-px text-[12.500px] text-white">
    <span className="ml-[14px] w-[62px]">Ready</span>
    <svg width="18" height="17" viewBox="0 0 18 17" fill="none" stroke="#e8e8e8" strokeWidth="1.300"><path d="M7 15.500H.7V1h15.600v5M.7 4h15.600M3 7h5M3 9.500h3M3 12h3" /><circle cx="12" cy="11" r="5" /><circle cx="12" cy="11" r="2" /></svg>
    <svg width="18" height="18" viewBox="0 0 18 18" fill="none" stroke="#e8e8e8" strokeWidth="1.300" className="ml-[22px]"><circle cx="7.500" cy="2.500" r="1.800" /><path d="M1 3q-.5 2 4 3.500V10l-2.500 6.500 2 .5L7.500 11l1 1.500M14 3q.5 2-4 3.500v3M10 10l7 7M17 10l-7 7" /></svg>
    <span className="ml-[4px] w-[156px] whitespace-nowrap font-bold tracking-[-0.06px]">Accessibility: Investigate</span>
    <Slot className="ml-[1253px] h-[27px] w-[50px] bg-[#5e5e5e]"><svg width="17" height="17" viewBox="0 0 17 17" fill="none" stroke="#eee" strokeWidth="1.500"><path d="M1 1h15v15H1zM6 1v15M11 1v15M1 6h15M1 11h15" /></svg></Slot>
    <Slot className="w-[50px]"><svg width="18" height="17" viewBox="0 0 18 17" fill="none" stroke="#eee" strokeWidth="1.400"><path d="M1 1h16v15H1zM4 3.500h10v10H4zM6 6.500h6M6 8.500h6M6 10.500h6" /></svg></Slot>
    <Slot className="w-[50px]"><svg width="18" height="17" viewBox="0 0 18 17" fill="none" stroke="#eee" strokeWidth="1.500"><path d="M1 1h16v15H1zM1 10h10V1M6 1v9" /></svg></Slot>
    <div className="ml-[7px] h-px w-[10px] bg-white" />
    <div className="relative ml-[6px] h-px w-[125px] bg-[#c5c5c5]"><div className="absolute -top-[7px] left-[60px] h-[14px] w-[6px] bg-[#c8c8c8]" /></div>
    <svg width="10" height="10" viewBox="0 0 10 10" stroke="#fff" className="ml-[6px]"><path d="M5 0v10M0 5h10" /></svg>
    <span className="ml-4 tracking-[-0.1px]">100%</span>
  </div>
);

/* ---------- Taskbar ---------- */
const TB = ({ children, dot, active }: { children: React.ReactNode; dot?: boolean; active?: boolean }) => (
  <div className="relative flex h-[60px] w-[55px] shrink-0 items-center justify-center">
    {active && <div className="absolute left-[3px] top-[5px] h-[50px] w-[48px] rounded-[5px] border border-[#e2e2e2] bg-[#f9f9f9]" />}
    {active && <div className="absolute left-[3px] top-[5px] h-[50px] w-[44px] rounded-[5px] border border-[#e2e2e2] bg-[#fafafa]" />}
    <div className="relative">{children}</div>
    {dot && <div className="absolute bottom-[6px] h-1 w-2 rounded-full bg-[#888]" />}
    {active && <div className="absolute bottom-[6px] h-1 w-5 rounded-full bg-[#0078d4]" />}
  </div>
);

const Taskbar = () => (
  <div className="flex h-[60px] shrink-0 bg-[linear-gradient(90deg,#fae7e5_0%,#f8e3e5_12%,#f7e2e3_20%,#f4dfd4_26%,#efdad2_38%,#ecdad6_46%,#f0ebea_51%,#f1f1f1_54%,#f1f1f1_78%,#f9e6e6_83%,#fae6e6_100%)] text-[14.500px] text-[#1c1c1c] shadow-[inset_0_1px_0_#c9bdbb]">
    <div className="flex w-[476px] items-center pl-[25px]">
      <svg width="30" height="25" viewBox="0 0 30 25"><defs><linearGradient id="cl" x1="0" y1="0" x2="0" y2="1"><stop offset="0" stopColor="#6c98ea" /><stop offset="1" stopColor="#a6cbf8" /></linearGradient></defs><path d="M7 24a7 7 0 0 1-1-13.500A8.500 8.500 0 0 1 21.500 7 8.500 8.500 0 0 1 22 24z" fill="url(#cl)" /><path d="M7 24a7 7 0 1 1 5-11.500q2 2 2 5l4-1.500q1.500-6 6.500-7A8.300 8.300 0 0 1 22 24z" fill="#8fb3f3" opacity=".65" /></svg>
      <div className="-mt-px ml-[9px] leading-5"><div className="tracking-[-0.4px]">24°C</div><div className="text-[#5a5a5a]">Cloudy</div></div>
    </div>
    <div className="flex w-[73px] items-center pl-[27px]">
      <svg width="30" height="30" viewBox="0 0 30 30"><defs><linearGradient id="wn" x1="0" y1="0" x2="1" y2="1"><stop offset="0" stopColor="#4cc9fb" /><stop offset="1" stopColor="#0068c9" /></linearGradient></defs><path d="M.5.500h14v14H.500zM15.500.500h14v14h-14zM.500 15.500h14v14H.500zM15.500 15.500h14v14h-14z" fill="url(#wn)" /></svg>
    </div>
    <div className="mt-[10px] flex h-[39px] w-[273px] items-center rounded-full border border-[#e0cfca] bg-[#fbf5f2] pl-[13px] text-[17px] text-[#5a5a5a]">
      <svg width="19" height="19" viewBox="0 0 19 19" fill="none" stroke="#222" strokeWidth="2"><circle cx="8" cy="8" r="6.800" /><path d="m13 13 5 5" strokeWidth="2.400" /></svg>
      <span className="ml-[12px] tracking-[-0.5px]">Search</span>
      <svg width="50" height="30" viewBox="0 0 50 30" className="ml-auto mr-3">
        <path d="M3 14q-4 10 6 12l4-1M2 18h9M4 22h8M21 14l-2 6-8-1" stroke="#999" fill="none" strokeWidth="1" />
        <path d="M7 14l3 10M21 13l-3 8h-9" stroke="#333" fill="none" strokeWidth="1.400" />
        <path d="M1 13.500Q4 11 5 8 7 1 14 1q9.500 0 9 11l-1 2H1z" fill="#2b4384" /><path d="M12 3q2 4 0 8" stroke="#16255a" fill="none" strokeWidth="1.500" />
        <path d="M14 25 38 8l4 4-24 17q-4 1-4-4z" fill="#eeb069" /><path d="M16 25 39 9" stroke="#ffd9a0" strokeWidth="1.500" /><path d="M41 9 49 3" stroke="#d8343f" strokeWidth="2.600" />
        <circle cx="42" cy="22" r="5.500" fill="#e8304f" /><path d="m38.500 18 7 8" stroke="#ffd9e0" strokeWidth="2.500" />
      </svg>
    </div>
    <div className="ml-[4px] flex">
      <TB><svg width="30" height="30" viewBox="0 0 30 30"><defs><linearGradient id="tv" x1="0" y1="0" x2="0" y2="1"><stop offset="0" stopColor="#555" /><stop offset="1" stopColor="#151515" /></linearGradient></defs><rect x="0" y="9" width="23" height="20" rx="1" fill="url(#tv)" /><rect x="7" y="1" width="23" height="20" rx="1" fill="#f6f6f6" /><rect x="7.500" y="9" width="15.500" height="12" fill="#b9b9b9" /></svg></TB>
      <TB><svg width="32" height="30" viewBox="0 0 32 30">
        <defs>
          <linearGradient id="c1" x1="0" y1="0" x2="0" y2="1"><stop offset="0" stopColor="#1b7fe8" /><stop offset=".35" stopColor="#22a8e0" /><stop offset=".65" stopColor="#4fbf6a" /><stop offset="1" stopColor="#f6c61c" /></linearGradient>
          <linearGradient id="c2" x1="0.500" y1="0" x2="0" y2="1"><stop offset="0" stopColor="#a24ce8" /><stop offset=".5" stopColor="#e8508f" /><stop offset="1" stopColor="#fb8a3c" /></linearGradient>
        </defs>
        <path d="M16 1h5q3 0 4 3l1.500 4.500h-8L16 1z" fill="#1b4fd0" />
        <path d="M16 29h-5q-2.500 0-4-4l-1-4h8z" fill="#f2603c" />
        <path d="M8.500 1H19q-2 1-3 5l-3.500 12q-1 3.500-4 3.500H4q-4-1-3-5l3-11Q5.500 1 8.500 1z" fill="url(#c1)" />
        <path d="M23.500 29H13q2-1 3-5l3.500-12q1-3.500 4-3.500H28q4 1 3 5l-3 11q-1.500 4.500-4.500 4.500z" fill="url(#c2)" />
      </svg></TB>
      <TB dot><svg width="30" height="28" viewBox="0 0 30 28"><path d="M0 1.500Q0 .500 1 .500h8l3.500 3H29q1 0 1 1V10H0z" fill="#dd9c0c" /><path d="M0 6h12l2-2.500h15q1 0 1 1V26q0 1.500-1.500 1.500h-27Q0 27.500 0 26z" fill="#fccb3e" /><path d="M5 27.500V22q0-2.500 2.500-2.500h15Q25 19.500 25 22v5.500z" fill="#1173c8" /><path d="M9 23.500h12" stroke="#0a4c92" strokeWidth="1.300" /></svg></TB>
      <TB><svg width="30" height="30" viewBox="0 0 30 30"><defs><linearGradient id="eg" x1="0" y1="0" x2="1" y2=".5"><stop offset="0" stopColor="#2aa9ea" /><stop offset=".5" stopColor="#35c3d4" /><stop offset="1" stopColor="#6de04c" /></linearGradient></defs>
        <circle cx="15" cy="15" r="15" fill="#1670c4" />
        <path d="M0 15A15 15 0 0 1 30 14q0 7-7 7-4 0-5-1.500-.5-1 1-2.500 1-5-5-7Q5 8 0 15z" fill="url(#eg)" />
        <path d="M11.500 16q0-4 4-5.500 3.500 2 3.500 6-1.500 2-.5 3 2 2 6 1.500l3.500-1.500q1 0 .5 1-1 2-3 4-6 1-10-1.500t-4-7z" fill="#0f4f9f" />
        <path d="M15 12q4 2 3.500 5-1.500 1.500-.5 2.500 2 1.800 6.500 1.500l4-1.500.8 1q-1.500 3-3.500 2.500-6 .5-9.500-2.500T15 12z" fill="#f1f1f1" />
      </svg></TB>
      <TB><svg width="30" height="30" viewBox="0 0 30 30"><defs><linearGradient id="st" x1="0" y1="0" x2="0" y2="1"><stop offset="0" stopColor="#0f63b4" /><stop offset="1" stopColor="#22305a" /></linearGradient></defs><path d="M8.500 7V2.500Q8.500 1.500 9.500 1.500h11q1 0 1 1V7" fill="none" stroke="#2fb4f2" strokeWidth="2" /><path d="M.5 5h29v21q0 3-3 3h-23q-3 0-3-3z" fill="url(#st)" /><path d="M9.500 11.500h5v5h-5z" fill="#f25022" /><path d="M15.500 11.500h5v5h-5z" fill="#7fba00" /><path d="M9.500 17.500h5v5h-5z" fill="#00a4ef" /><path d="M15.500 17.500h5v5h-5z" fill="#ffb900" /></svg></TB>
      <TB><div className="flex h-[30px] w-[30px] items-center justify-center rounded-[2px] bg-[#0096d6] text-white"><span className="text-[10px] tracking-[-0.5px]">my</span><span className="text-[13px] font-bold italic tracking-[-0.8px]">hp</span></div></TB>
      <TB><div className="relative flex size-[28px] items-center justify-center rounded-full bg-[#0096d6] text-[25px] font-bold text-white">?<div className="absolute -right-[9px] -top-[7px] size-5 rounded-full bg-[#ffbf0f]" /></div></TB>
      <TB><svg width="30" height="30" viewBox="0 0 30 30" fill="none"><path d="M2 28.500 4 22a13 13 0 1 1 4.500 4.500z" stroke="#1a8a55" strokeWidth="2.800" /><path d="M10 7.500q1.500-.5 2 1l1 2.500q0 1-1.500 2.500 1.500 3.500 5.500 5 1.500-2 2.500-2l3 1.500q1 .5.500 2-1 3-4 3-7-.5-11-7.500-2-4.500 2-8z" fill="#1a8a55" /></svg></TB>
      <TB><svg width="30" height="30" viewBox="0 0 30 30"><circle cx="15" cy="15" r="15" fill="#ffcd40" /><path d="M15 15 2 7.500A15 15 0 0 1 28 7.500H15z" fill="#e23b2e" /><path d="M2 7.500A15 15 0 0 0 15 30l6.500-11.300L8.500 18.700z" fill="#2d9f48" /><path d="M15 7.500h13A15 15 0 0 1 15 30l6.500-11.300z" fill="#fdc92e" /><circle cx="15" cy="15" r="7.500" fill="#fff" /><circle cx="15" cy="15" r="6" fill="#3079ed" /></svg></TB>
      <TB active><ExcelLogo size={30} /></TB>
      <TB dot><svg width="30" height="30" viewBox="0 0 30 30" fill="none" stroke="#fff" strokeWidth="1.800"><rect width="30" height="30" rx="4" fill="#f36f21" stroke="none" /><circle cx="12.500" cy="9.500" r="4" /><path d="M10 13.500q-5 3-4 9.500 1 2 6 0l3-3M13 24l1.500-5.500 7-7.500 3.500 3.500-7 7.500zM19.500 13l3.500 3.500" /></svg></TB>
    </div>
    <div className="ml-auto flex items-center pr-[25px]">
      <svg width="14" height="8" viewBox="0 0 14 8" fill="none" stroke="#222" strokeWidth="1.600"><path d="M1 7 7 1l6 6" /></svg>
      <svg width="22" height="18" viewBox="0 0 22 18" fill="#9a9a9a" stroke="#222" strokeWidth="1.500" className="ml-[22px]"><path d="M6 15.500a4.500 4.500 0 0 1-.5-9A6 6 0 0 1 16.500 6.500a4.500 4.500 0 0 1 0 9z" /><path d="M3 1.500 18.500 17" /></svg>
      <div className="-mt-px ml-[20px] w-[32px] text-center leading-5 tracking-[-0.1px]">ENG<br />IN</div>
      <svg width="20" height="20" viewBox="0 0 20 20" fill="none" stroke="#222" strokeWidth="1.200" className="ml-[22px]"><path d="M18.500 9.500A8.700 8.700 0 1 0 9 18.500M1 7h17M1 12.500h9M9.500 1Q5 5 5.500 10t3.500 8.500M9.500 1q4 3.500 4 8" /><circle cx="14.500" cy="14.500" r="4.500" /><path d="m11.500 17.500 6-6" /></svg>
      <svg width="20" height="16" viewBox="0 0 20 16" fill="none" stroke="#222" strokeWidth="1.200" className="ml-[10px]"><path d="M1 5.500h3L8.500 1.500v13L4 10.500H1zM11 5.500q2 2.500 0 5M13.500 3.500q3.500 4.500 0 9" /><path d="M16 1.500q5 6.500 0 13" stroke="#bbb" /></svg>
      <svg width="21" height="16" viewBox="0 0 21 16" className="ml-[10px]"><rect x="2.500" y="4" width="15" height="10.500" rx="2" fill="none" stroke="#222" strokeWidth="1.300" /><rect x="4.500" y="6" width="11" height="6.500" fill="#111" /><path d="M18.500 7v4.500h1.500V7z" fill="#222" /><path d="M4.500 0 0 6h3l-1 4 4.500-6h-3z" fill="#111" stroke="#fae6e6" strokeWidth=".6" /></svg>
      <div className="-mt-px ml-[18px] w-[79px] text-right leading-5">19:55<br />01-08-2025</div>
    </div>
  </div>
);

export default function App() {
  return (
    <div className={"flex h-[1080px] w-[1920px] flex-col overflow-hidden bg-[linear-gradient(180deg,#5b5957_0%,#5a5856_40%,#5c5655_100%)] " + UI}>
      <TitleBar />
      <TabsBar />
      <Ribbon />
      <FormulaBar />
      <div className={CAL}><Worksheet /></div>
      <SheetTabs />
      <StatusBar />
      <Taskbar />
    </div>
  );
}
